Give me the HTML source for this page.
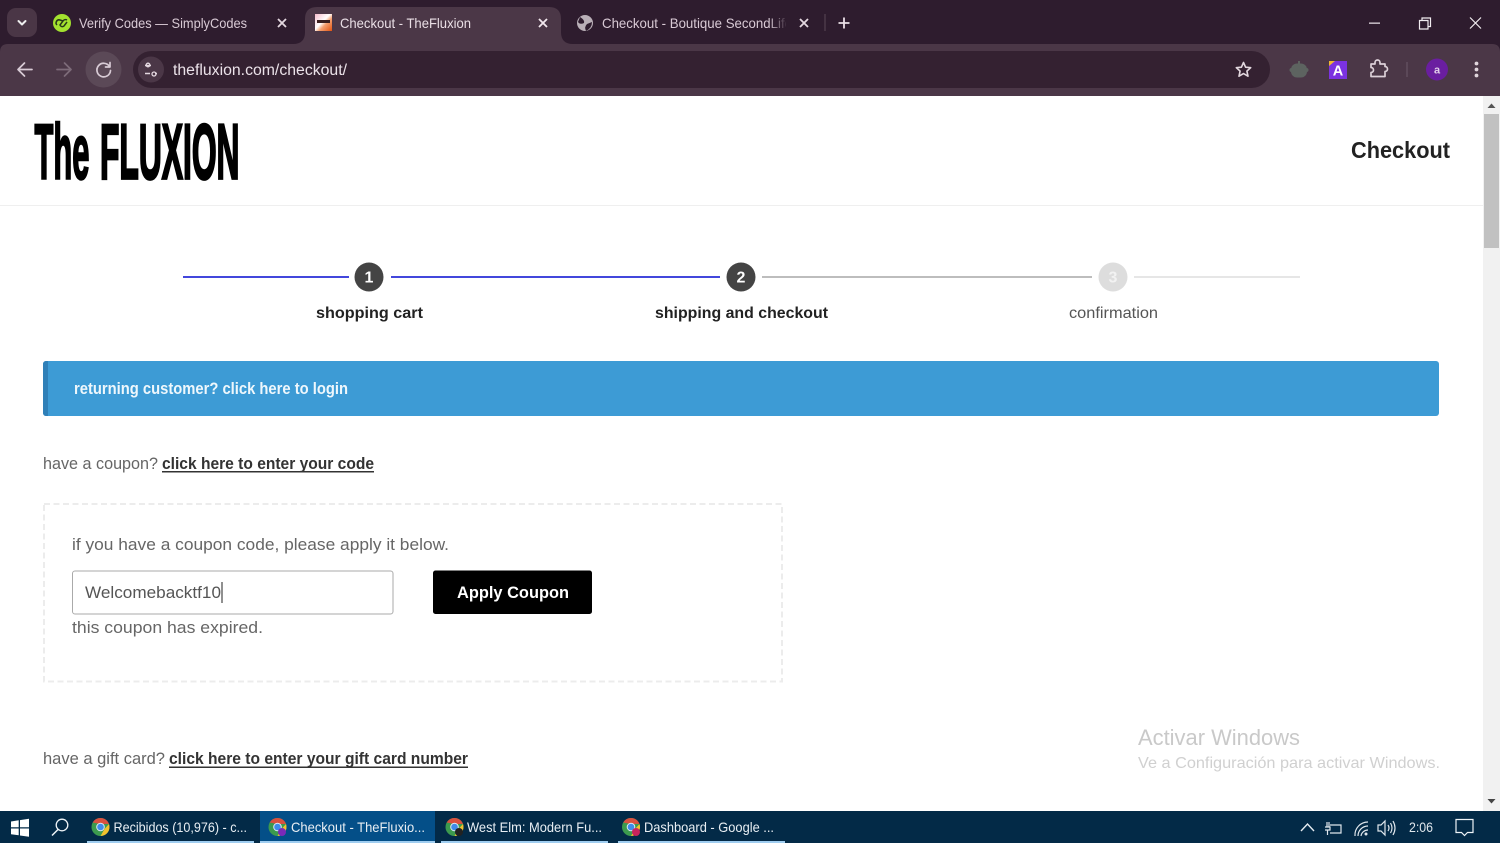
<!DOCTYPE html>
<html lang="en">
<head>
<meta charset="utf-8">
<title>Checkout - TheFluxion</title>
<style>
html,body{margin:0;padding:0;width:1500px;height:843px;overflow:hidden;background:#fff}
svg{display:block;position:absolute;left:0;top:0;filter:blur(.3px)}
text{font-family:"Liberation Sans","DejaVu Sans",sans-serif;white-space:pre}
.tab{font-size:14px;fill:#d9cad5}
.task{font-size:14px;fill:#e8eef3}
.ui{fill:none;stroke:#d8cbd5;stroke-width:1.7;stroke-linecap:round;stroke-linejoin:round}
.body{font-size:17px;fill:#666}
.lnk{font-size:17px;font-weight:bold;fill:#333}
.step{font-size:16px;font-weight:bold;fill:#222}
.num{font-size:16px;font-weight:bold;fill:#fff;text-anchor:middle}
.tray{fill:none;stroke:#dfe6ec;stroke-width:1.2}
</style>
</head>
<body>
<svg width="1500" height="843" viewBox="0 0 1500 843" xmlns="http://www.w3.org/2000/svg">
<defs>
  <linearGradient id="fade" x1="0" x2="1"><stop offset="0" stop-color="#2e1c2e" stop-opacity="0"/><stop offset="1" stop-color="#2e1c2e"/></linearGradient>
  <linearGradient id="fav" x1="0" x2="1" y1="0" y2="1"><stop offset="0" stop-color="#f5bccb"/><stop offset=".45" stop-color="#fff"/><stop offset=".62" stop-color="#f4a070"/><stop offset="1" stop-color="#e2510f"/></linearGradient>
  <g id="chrome">
    <circle r="9" fill="#3c9a4e"/>
    <path d="M-7.8-4.500A9 9 0 0 1 0-9A9 9 0 0 1 8.500-3L0-3Z" fill="#d9503f"/>
    <path d="M8.500-3A9 9 0 0 1 0 9L4 2Z" fill="#f2c12e"/>
    <circle r="4.300" fill="#dfeaf5"/>
    <circle r="3.300" fill="#3f8bea"/>
  </g>
</defs>

<!-- Browser chrome -->
<rect x="0" y="0" width="1500" height="96" fill="#2e1c2e"/>
<path d="M0 96V52Q0 44 8 44H1492Q1500 44 1500 52V96Z" fill="#4b3747"/>
<path d="M293 44Q305 44 305 32V19Q305 7 317 7H549Q561 7 561 19V32Q561 44 573 44Z" fill="#4b3747"/>
<rect x="7" y="8" width="30" height="29" rx="9" fill="#4a3646"/>
<path d="M18.500 21L22 24.500L25.500 21" fill="none" stroke="#eee" stroke-width="2" stroke-linecap="round" stroke-linejoin="round"/>

<!-- Tab 1 -->
<circle cx="62" cy="23" r="9" fill="#a3e22f"/>
<path d="M57 25a3 3 0 0 1 3-5l3 1M67 20a3 3 0 0 0-4 1l-3 4a2.500 2.500 0 0 0 4 1l3-4" fill="none" stroke="#27361a" stroke-width="1.500"/>
<text x="79" y="28" class="tab" textLength="168" lengthAdjust="spacingAndGlyphs">Verify Codes — SimplyCodes</text>
<path d="M278 19L286 27M286 19L278 27" fill="none" stroke="#e4d8e0" stroke-width="1.800"/>

<!-- Tab 2 -->
<rect x="315" y="14" width="17" height="17" fill="url(#fav)"/>
<rect x="317" y="20" width="13" height="3" fill="#3a2020"/>
<text x="340" y="28" class="tab" style="fill:#eadfe6" textLength="131" lengthAdjust="spacingAndGlyphs">Checkout - TheFluxion</text>
<path d="M539 19L547 27M547 19L539 27" fill="none" stroke="#f2e8ee" stroke-width="1.800"/>

<!-- Tab 3 -->
<circle cx="585" cy="23" r="8" fill="#b9afb7"/>
<path d="M580 17Q585 20 584 23Q580 25 578 22ZM587 24L592 22Q592 28 586 31Q584 27 587 24Z" fill="#2e1c2e"/>
<text x="602" y="28" class="tab" textLength="190" lengthAdjust="spacingAndGlyphs">Checkout - Boutique SecondLife</text>
<rect x="768" y="12" width="20" height="22" fill="url(#fade)"/>
<rect x="786" y="12" width="8" height="22" fill="#2e1c2e"/>
<path d="M800 19L808 27M808 19L800 27" fill="none" stroke="#e4d8e0" stroke-width="1.800"/>
<rect x="824.500" y="14" width="1" height="17" fill="#5a4757"/>
<path d="M844 17.500V28.500M838.500 23H849.500" fill="none" stroke="#eadfe6" stroke-width="1.800"/>

<!-- Window controls -->
<rect x="1369" y="22.500" width="11" height="1.300" fill="#e0d8de"/>
<path d="M1419.500 20.500h8.500v8.500h-8.500zM1422 20.500v-2.500h8.500v8.500h-2.500" fill="none" stroke="#f1ecf0" stroke-width="1.200"/>
<path d="M1470 17.500L1481 28.500M1481 17.500L1470 28.500" fill="none" stroke="#f1ecf0" stroke-width="1.200"/>

<!-- Toolbar -->
<path class="ui" d="M32 69.500H18.500M24.500 63L18 69.500L24.500 76"/>
<path class="ui" style="stroke:#7d6b79" d="M57 69.500H70.500M64.500 63L71 69.500L64.500 76"/>
<circle cx="103.500" cy="69.500" r="18" fill="#5b4957"/>
<path class="ui" d="M109.500 66.500A6.800 6.800 0 1 0 110.500 70.500M110 62.500V67H105.500"/>
<rect x="133" y="51" width="1137" height="37" rx="18.500" fill="#342131"/>
<circle cx="151" cy="69.500" r="13" fill="#4b3747"/>
<path d="M145 65.500H151M155 73.500H157M145 73.500H150" fill="none" stroke="#e4d8e0" stroke-width="1.500"/>
<circle cx="148" cy="65" r="1.800" fill="none" stroke="#e4d8e0" stroke-width="1.300"/>
<circle cx="154" cy="74" r="2" fill="none" stroke="#e4d8e0" stroke-width="1.300"/>
<text x="173" y="75" style="font-size:15.500px;fill:#ebe2e9" textLength="174" lengthAdjust="spacingAndGlyphs">thefluxion.com/checkout/</text>
<path d="M1243.500 62.500L1245.600 67.200L1250.700 67.700L1246.900 71.100L1248 76.200L1243.500 73.600L1239 76.200L1240.100 71.100L1236.300 67.700L1241.400 67.200Z" fill="none" stroke="#e2d7de" stroke-width="1.600" stroke-linejoin="round"/>

<!-- Extensions -->
<rect x="1291" y="63.500" width="16" height="14" rx="6" fill="#5d6360"/>
<rect x="1298" y="61" width="2" height="4" fill="#5d6360"/><rect x="1289.500" y="68" width="19" height="4" rx="2" fill="#5d6360"/>
<rect x="1329" y="61" width="18" height="18" fill="#7b32e0"/>
<path d="M1329 61h6l-6 5z" fill="#f1b82d"/>
<text x="1338" y="75.500" style="font-size:14.500px;font-weight:bold;fill:#fff;text-anchor:middle">A</text>
<path class="ui" d="M1371 64H1375V62.500A2.500 2.500 0 0 1 1380 62.500V64H1385V66.500A2.500 2.500 0 0 1 1385 71.500V76.500H1371V72.500A2.500 2.500 0 0 0 1371 67.500Z" style="stroke:#dcd0d8"/>
<rect x="1406.500" y="62" width="1" height="15" fill="#6b5968"/>
<circle cx="1437" cy="69.500" r="11" fill="#6a1ea0"/>
<text x="1437" y="73.500" style="font-size:11px;font-weight:bold;fill:#e0cfe9;text-anchor:middle">a</text>
<circle cx="1476.500" cy="63.500" r="1.900" fill="#e0d5dc"/><circle cx="1476.500" cy="69.500" r="1.900" fill="#e0d5dc"/><circle cx="1476.500" cy="75.500" r="1.900" fill="#e0d5dc"/>

<!-- Page -->
<rect x="0" y="96" width="1483" height="715" fill="#fff"/>
<rect x="0" y="205" width="1483" height="1" fill="#efefef"/>

<!-- Logo -->
<text x="34.500" y="178.500" textLength="55" lengthAdjust="spacingAndGlyphs" style="font-size:78px;font-weight:bold;fill:#000;stroke:#000;stroke-width:2.400">The</text>
<text x="100" y="178.500" textLength="139.500" lengthAdjust="spacingAndGlyphs" style="font-size:78px;font-weight:bold;fill:#000;stroke:#000;stroke-width:2.800">FLUXION</text>
<text x="1351" y="158" textLength="99" lengthAdjust="spacingAndGlyphs" style="font-size:23px;font-weight:bold;fill:#222">Checkout</text>

<!-- Steps -->
<rect x="183" y="276" width="166" height="2" fill="#4347dc"/>
<rect x="391" y="276" width="329" height="2" fill="#4347dc"/>
<rect x="762" y="276" width="330" height="2" fill="#bdbdbd"/>
<rect x="1134" y="276" width="166" height="2" fill="#e6e6e6"/>
<circle cx="369" cy="277" r="14.500" fill="#444"/>
<circle cx="741" cy="277" r="14.500" fill="#444"/>
<circle cx="1113" cy="277" r="14.500" fill="#ddd"/>
<text x="369" y="282.500" class="num">1</text>
<text x="741" y="282.500" class="num">2</text>
<text x="1113" y="282.500" class="num" style="fill:#f2f2f2">3</text>
<text x="316" y="318" class="step" textLength="107" lengthAdjust="spacingAndGlyphs">shopping cart</text>
<text x="655" y="318" class="step" textLength="173" lengthAdjust="spacingAndGlyphs">shipping and checkout</text>
<text x="1069" y="318" textLength="89" lengthAdjust="spacingAndGlyphs" style="font-size:16px;fill:#555">confirmation</text>

<!-- Banner -->
<rect x="43" y="361" width="1396" height="55" rx="3" fill="#3d9bd5"/>
<path d="M46 361h2v55h-2a3 3 0 0 1-3-3v-49a3 3 0 0 1 3-3z" fill="#2f80b8"/>
<text x="74" y="394" textLength="274" lengthAdjust="spacingAndGlyphs" style="font-size:17px;font-weight:bold;fill:#eef7fc">returning customer? click here to login</text>

<!-- Coupon prompt -->
<text x="43" y="469" class="body" textLength="115" lengthAdjust="spacingAndGlyphs">have a coupon?</text>
<text x="162" y="469" class="lnk" textLength="212" lengthAdjust="spacingAndGlyphs">click here to enter your code</text>
<rect x="162" y="471" width="212" height="1.500" fill="#333"/>

<!-- Coupon box -->
<rect x="44" y="504" width="738" height="177.500" fill="none" stroke="#ececec" stroke-width="2" stroke-dasharray="6 3.500"/>
<text x="72" y="550" class="body" textLength="377" lengthAdjust="spacingAndGlyphs">if you have a coupon code, please apply it below.</text>
<rect x="72.500" y="571" width="320.500" height="43" rx="2.500" fill="#fff" stroke="#aaa"/>
<text x="85" y="598" class="body" style="fill:#555" textLength="136" lengthAdjust="spacingAndGlyphs">Welcomebacktf10</text>
<rect x="221.500" y="582" width="1" height="21" fill="#222"/>
<rect x="433" y="570.500" width="159" height="43.500" rx="2.500" fill="#000"/>
<text x="457" y="598" textLength="112" lengthAdjust="spacingAndGlyphs" style="font-size:17px;font-weight:bold;fill:#fff">Apply Coupon</text>
<text x="72" y="633" class="body" textLength="191" lengthAdjust="spacingAndGlyphs">this coupon has expired.</text>

<!-- Gift card -->
<text x="43" y="764" class="body" textLength="122" lengthAdjust="spacingAndGlyphs">have a gift card?</text>
<text x="169" y="764" class="lnk" textLength="299" lengthAdjust="spacingAndGlyphs">click here to enter your gift card number</text>
<rect x="169" y="766.500" width="299" height="1.500" fill="#333"/>

<!-- Activation watermark -->
<text x="1138" y="745" textLength="162" lengthAdjust="spacingAndGlyphs" style="font-size:22px;fill:#c9c9c9">Activar Windows</text>
<text x="1138" y="768" textLength="302" lengthAdjust="spacingAndGlyphs" style="font-size:16px;fill:#d0d0d0">Ve a Configuración para activar Windows.</text>

<!-- Scrollbar -->
<rect x="1483" y="96" width="17" height="715" fill="#f1f1f1"/>
<rect x="1484" y="114" width="15" height="134" fill="#c1c1c1"/>
<path d="M1487.500 108L1491.500 103.500L1495.500 108Z" fill="#555"/>
<path d="M1487.500 799L1491.500 803.500L1495.500 799Z" fill="#444"/>

<!-- Taskbar -->
<rect x="0" y="811" width="1500" height="32" fill="#032a47"/>
<rect x="260" y="811" width="175" height="32" fill="#044f88"/>
<rect x="87" y="841" width="167" height="2" fill="#9fcdf0"/>
<rect x="260" y="841" width="175" height="2" fill="#9fcdf0"/>
<rect x="441" y="841" width="167" height="2" fill="#9fcdf0"/>
<rect x="618" y="841" width="167" height="2" fill="#9fcdf0"/>
<path d="M11 821.500L18.700 820.300V827.200H11ZM20 820.100L29 818.800V827.200H20ZM11 828.500H18.700V835.300L11 834.200ZM20 828.500H29V836.800L20 835.500Z" fill="#fff"/>
<circle cx="62" cy="825" r="5.800" fill="none" stroke="#eef3f7" stroke-width="1.300"/>
<path d="M58 829.500L52 835.500" fill="none" stroke="#eef3f7" stroke-width="1.500"/>

<use href="#chrome" x="100.500" y="827"/>
<text x="113.500" y="832" class="task" textLength="133.500" lengthAdjust="spacingAndGlyphs">Recibidos (10,976) - c...</text>
<use href="#chrome" x="277.500" y="827"/>
<circle cx="282" cy="832" r="4" fill="#7b2ab8"/>
<text x="291" y="832" class="task" textLength="134" lengthAdjust="spacingAndGlyphs">Checkout - TheFluxio...</text>
<use href="#chrome" x="454.500" y="827"/>
<circle cx="459" cy="832" r="4" fill="#222"/>
<text x="467" y="832" class="task" textLength="135" lengthAdjust="spacingAndGlyphs">West Elm: Modern Fu...</text>
<use href="#chrome" x="631" y="827"/>
<circle cx="636" cy="832" r="4" fill="#c9245c"/>
<text x="644" y="832" class="task" textLength="130" lengthAdjust="spacingAndGlyphs">Dashboard - Google ...</text>

<!-- Tray -->
<path d="M1301 831L1307.500 824L1314 831" fill="none" stroke="#e6ecf1" stroke-width="1.400"/>
<path class="tray" d="M1330 825H1341V833H1330M1325 827H1330V830H1325M1327 822V827M1329 822V827M1327.500 830V835"/>
<path class="tray" d="M1355 836A13 13 0 0 1 1368 822M1358 836A10 10 0 0 1 1368 826M1361 836A7 7 0 0 1 1368 830"/>
<circle cx="1366" cy="834" r="1.500" fill="#dfe6ec"/>
<path class="tray" d="M1378 825H1381L1385 821V835L1381 831H1378ZM1388 825Q1390 828 1388 831M1390.500 823Q1393.500 828 1390.500 833M1393 821Q1397 828 1393 835"/>
<text x="1409" y="832" textLength="24" lengthAdjust="spacingAndGlyphs" style="font-size:14px;fill:#dfe6ec">2:06</text>
<path d="M1456 819.500H1473V832.500H1467.500L1464.500 835.500L1461.500 832.500H1456Z" fill="none" stroke="#eef3f7" stroke-width="1.200"/>
</svg>
</body>
</html>
